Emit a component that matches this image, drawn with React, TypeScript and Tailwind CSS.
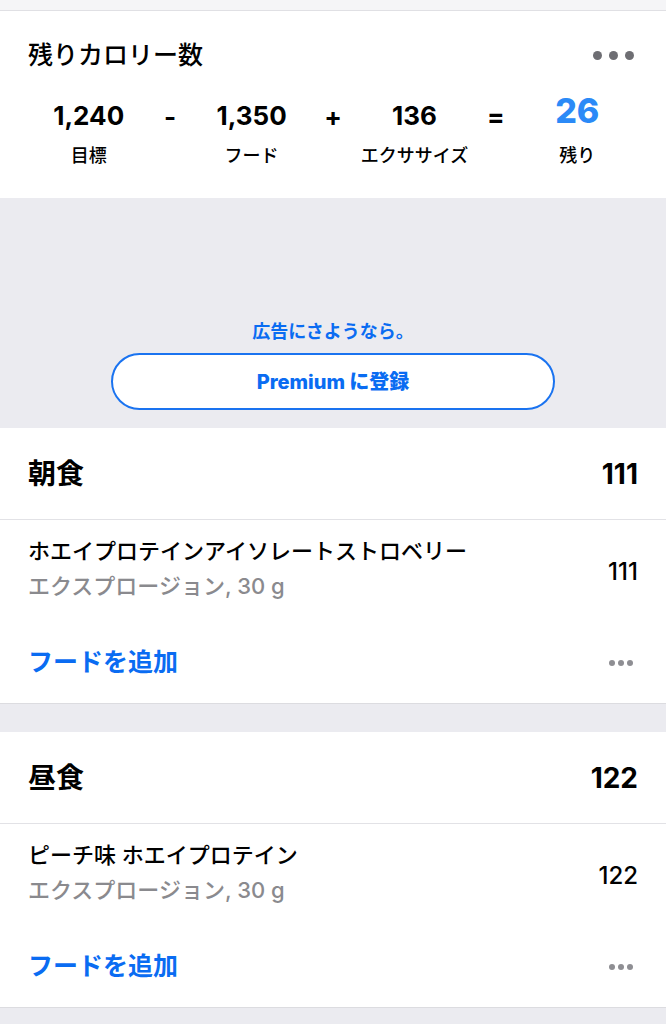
const Dots = ({ big }: { big?: boolean }) => (
  <div className={big ? "flex gap-[7px]" : "flex gap-[3px]"}>
    {[0, 1, 2].map((i) => (
      <span
        key={i}
        className={
          big
            ? "block h-[9px] w-[9px] rounded-full bg-[#6e6e73]"
            : "block h-[6px] w-[6px] rounded-full bg-[#8e8e93]"
        }
      />
    ))}
  </div>
);

const summary = [
  { value: "1,240", label: "目標" },
  { op: "-" },
  { value: "1,350", label: "フード" },
  { op: "+" },
  { value: "136", label: "エクササイズ" },
  { op: "=" },
  { value: "26", label: "残り", highlight: true },
];

type Meal = { title: string; total: string; name: string; detail: string; kcal: string };

const MealCard = ({ meal }: { meal: Meal }) => (
  <section className="border-b border-[#dcdce0] bg-white">
    <div className="flex h-[92px] items-center justify-between border-b border-[#e2e2e6] px-7">
      <h2 className="text-[28px] font-bold text-black">{meal.title}</h2>
      <span className="text-[28px] font-bold text-black">{meal.total}</span>
    </div>
    <div className="flex items-center justify-between px-7 pt-[14px]">
      <div className="flex flex-col">
        <span className="text-[22px] leading-[35px] font-medium text-black">{meal.name}</span>
        <span className="text-[22px] leading-[35px] font-medium text-[#8a8a8e]">{meal.detail}</span>
      </div>
      <span className="pt-[6px] text-[24px] font-medium text-black">{meal.kcal}</span>
    </div>
    <div className="flex h-[99px] items-center justify-between px-7 pt-[18px]">
      <span className="text-[25px] font-bold text-[#0a6cf2]">フードを追加</span>
      <div className="pr-[5px]">
        <Dots />
      </div>
    </div>
  </section>
);

export default function App() {
  const meals: Meal[] = [
    {
      title: "朝食",
      total: "111",
      name: "ホエイプロテインアイソレートストロベリー",
      detail: "エクスプロージョン, 30 g",
      kcal: "111",
    },
    {
      title: "昼食",
      total: "122",
      name: "ピーチ味 ホエイプロテイン",
      detail: "エクスプロージョン, 30 g",
      kcal: "122",
    },
  ];

  return (
    <div
      className="min-h-[1024px] bg-[#ebebf0]"
      style={{ fontFamily: '"Inter", "Noto Sans CJK JP", sans-serif' }}
    >
      <div className="h-[11px] border-b border-[#e0e0e4] bg-[#f5f5f7]" />

      <section className="bg-white px-7 pt-[27px] pb-[27px]">
        <div className="flex items-center justify-between">
          <h1 className="text-[25px] leading-[34px] font-medium text-black">残りカロリー数</h1>
          <div className="pr-[4px]">
            <Dots big />
          </div>
        </div>
        <div className="mx-5 mt-[24px] grid grid-cols-7">
          {summary.map((item, i) =>
            item.op ? (
              <div key={i} className="flex h-[40px] items-center justify-center text-[26px] font-bold text-black">
                {item.op}
              </div>
            ) : (
              <div key={i} className="flex flex-col items-center">
                <span
                  className={
                    item.highlight
                      ? "h-[40px] text-[34px] leading-[30px] font-extrabold text-[#2b8af7]"
                      : "h-[40px] text-[26px] leading-[40px] font-bold text-black"
                  }
                >
                  {item.value}
                </span>
                <span className="mt-[5px] whitespace-nowrap text-[18px] leading-[30px] font-medium text-black">
                  {item.label}
                </span>
              </div>
            )
          )}
        </div>
      </section>

      <section className="flex h-[230px] flex-col items-center justify-end pb-[18px]">
        <p className="text-[18px] font-bold text-[#0a6cf2]">広告にさようなら。</p>
        <button className="mt-[8px] flex h-[57px] w-[444px] items-center justify-center rounded-full border-2 border-[#1a73f0] bg-white text-[20px] font-extrabold text-[#0a6cf2]">
          Premium に登録
        </button>
      </section>

      <MealCard meal={meals[0]} />
      <div className="h-[28px]" />
      <MealCard meal={meals[1]} />
    </div>
  );
}
